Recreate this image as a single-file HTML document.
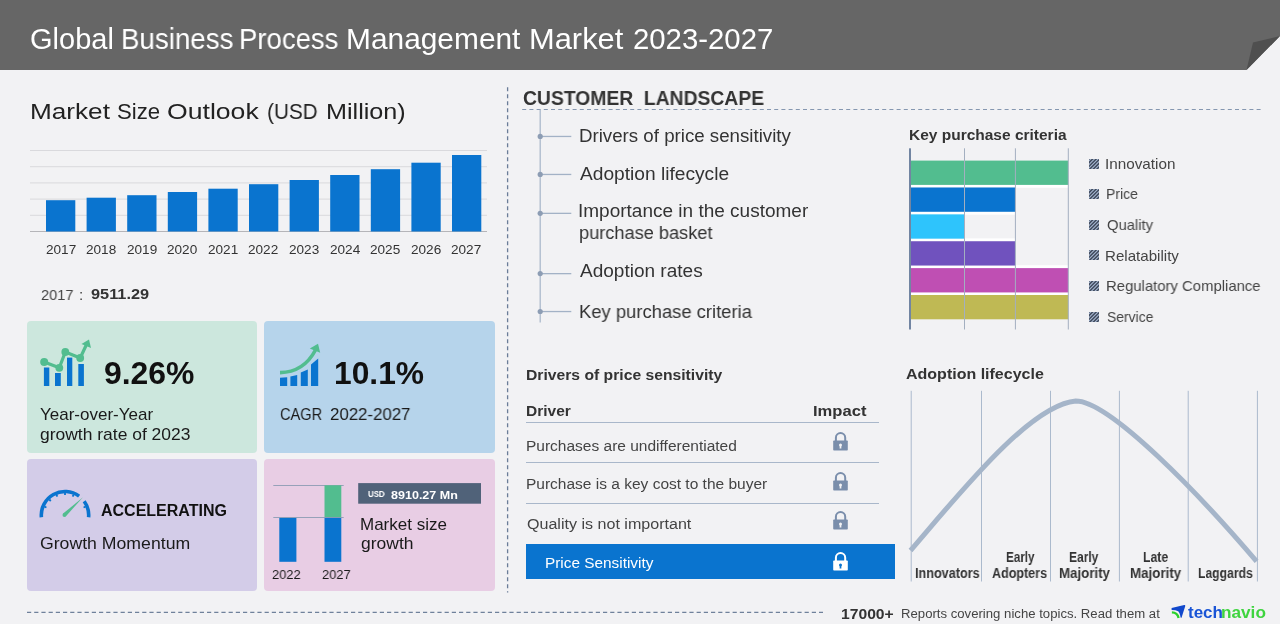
<!DOCTYPE html>
<html><head><meta charset="utf-8">
<style>
*{margin:0;padding:0;box-sizing:border-box}
html,body{width:1280px;height:624px;overflow:hidden;background:#f2f2f4;font-family:"Liberation Sans",sans-serif;color:#333;position:relative}
.a{position:absolute;white-space:nowrap;will-change:transform}
.r{position:absolute}
</style></head><body>
<svg class="r" style="left:0;top:0" width="1280" height="72"><polygon points="0,0 1280,0 1280,36 1246.5,70 0,70" fill="#666"/><polygon points="1246.5,70 1253,42.5 1280,36" fill="#4f4f4f"/></svg>
<svg class="r" style="left:0;top:140px" width="500" height="100"><rect x="30" y="10.00" width="457" height="1" fill="#d9d9dd"/><rect x="30" y="26.20" width="457" height="1" fill="#d9d9dd"/><rect x="30" y="42.40" width="457" height="1" fill="#d9d9dd"/><rect x="30" y="58.60" width="457" height="1" fill="#d9d9dd"/><rect x="30" y="74.80" width="457" height="1" fill="#d9d9dd"/><rect x="30" y="91.00" width="457" height="1" fill="#b5b5b9"/><rect x="46" y="60.20" width="29.3" height="31.30" fill="#0a74cf"/><rect x="86.6" y="57.70" width="29.3" height="33.80" fill="#0a74cf"/><rect x="127.2" y="55.20" width="29.3" height="36.30" fill="#0a74cf"/><rect x="167.8" y="52.00" width="29.3" height="39.50" fill="#0a74cf"/><rect x="208.4" y="48.70" width="29.3" height="42.80" fill="#0a74cf"/><rect x="249" y="44.20" width="29.3" height="47.30" fill="#0a74cf"/><rect x="289.6" y="40.00" width="29.3" height="51.50" fill="#0a74cf"/><rect x="330.2" y="35.00" width="29.3" height="56.50" fill="#0a74cf"/><rect x="370.8" y="29.20" width="29.3" height="62.30" fill="#0a74cf"/><rect x="411.4" y="22.70" width="29.3" height="68.80" fill="#0a74cf"/><rect x="452" y="15.00" width="29.3" height="76.50" fill="#0a74cf"/></svg>
<div class="r" style="left:27px;top:320.8px;width:230px;height:132px;background:#cce7dd;border-radius:4px"></div>
<div class="r" style="left:264.4px;top:320.8px;width:230.3px;height:132px;background:#b6d4eb;border-radius:4px"></div>
<div class="r" style="left:27px;top:459px;width:230px;height:131.6px;background:#d3cce8;border-radius:4px"></div>
<div class="r" style="left:264.4px;top:459px;width:230.3px;height:131.6px;background:#e8cde4;border-radius:4px"></div>
<svg class="r" style="left:36px;top:334px" width="60" height="60">
<g fill="#0a74cf"><rect x="7.9" y="33.5" width="5.4" height="18.5"/><rect x="19" y="39" width="5.8" height="13"/><rect x="31" y="23.6" width="5.3" height="28.4"/><rect x="42.3" y="30" width="5.6" height="22"/></g>
<polyline points="8.2,28 23.3,33.8 29.3,18 44.2,24 50.5,10.5" stroke="#52bd8f" stroke-width="3.2" fill="none" stroke-linejoin="round"/>
<g fill="#52bd8f"><circle cx="8.2" cy="28" r="4"/><circle cx="23.3" cy="33.8" r="3.9"/><circle cx="29.3" cy="18" r="3.9"/><circle cx="44.2" cy="24" r="3.9"/></g>
<polygon points="53,5.5 45.5,10 55,14" fill="#52bd8f"/>
</svg>
<svg class="r" style="left:274px;top:340px" width="50" height="50">
<g fill="#0a74cf"><polygon points="6,37.8 13.2,37.2 13.2,46 6,46"/><polygon points="16.4,36.5 23.2,34.9 23.2,46 16.4,46"/><polygon points="26.8,32.5 33.8,29.6 33.8,46 26.8,46"/><polygon points="37,24.4 44.2,18.4 44.2,46 37,46"/></g>
<path d="M6,32.6 C20,32.4 33,26 41.5,10" stroke="#52bd8f" stroke-width="3.6" fill="none"/>
<polygon points="44,3.8 35.8,8.6 46.2,12.8" fill="#52bd8f"/>
</svg>
<svg class="r" style="left:36px;top:484px" width="60" height="40"><path d="M5.39,33.27 A23.7,23.7 0 0 1 43.10,12.15 M48.17,17.27 A23.7,23.7 0 0 1 52.61,33.27" stroke="#0a74cf" stroke-width="3.6" fill="none"/><line x1="8.49" y1="22.70" x2="10.43" y2="23.51" stroke="#0a74cf" stroke-width="1.8"/><line x1="13.30" y1="15.50" x2="14.79" y2="16.99" stroke="#0a74cf" stroke-width="1.8"/><line x1="20.50" y1="10.69" x2="21.31" y2="12.63" stroke="#0a74cf" stroke-width="1.8"/><line x1="29.00" y1="9.00" x2="29.00" y2="11.10" stroke="#0a74cf" stroke-width="1.8"/><line x1="37.50" y1="10.69" x2="36.69" y2="12.63" stroke="#0a74cf" stroke-width="1.8"/><line x1="49.51" y1="22.70" x2="47.57" y2="23.51" stroke="#0a74cf" stroke-width="1.8"/><polygon points="29.71,32.38 47.00,13.30 27.09,29.62" fill="#52bd8f"/><circle cx="28.4" cy="31.0" r="1.9" fill="#52bd8f"/></svg>
<svg class="r" style="left:264px;top:470px" width="230" height="100">
<rect x="9.3" y="15" width="70.4" height="0.9" fill="#8d9cb4"/>
<rect x="15.3" y="47.8" width="17.1" height="44" fill="#0a74cf"/>
<rect x="60.5" y="15.3" width="16.8" height="32" fill="#52bd8f"/>
<rect x="60.5" y="47.3" width="16.8" height="44.5" fill="#0a74cf"/>
<rect x="9.3" y="47" width="70.4" height="0.9" fill="#8d9cb4"/>
<rect x="94.2" y="13.1" width="122.8" height="20.6" fill="#506279"/>
</svg>
<svg class="r" style="left:500px;top:80px" width="20" height="520"><line x1="7.6" y1="7.3" x2="7.6" y2="512.4" stroke="#6b7d98" stroke-width="1.3" stroke-dasharray="4 3"/></svg>
<svg class="r" style="left:520px;top:100px" width="750" height="20"><line x1="2.2" y1="9.5" x2="742.5" y2="9.5" stroke="#8597b0" stroke-width="1.2" stroke-dasharray="4 3.2"/></svg>
<svg class="r" style="left:520px;top:100px" width="80" height="230"><rect x="19.6" y="9.5" width="1.15" height="213" fill="#a3b2c6"/><rect x="20" y="35.80" width="31.3" height="1.3" fill="#a3b2c6"/><circle cx="20.2" cy="36.40" r="2.6" fill="#8d9db4"/><rect x="20" y="73.80" width="31.3" height="1.3" fill="#a3b2c6"/><circle cx="20.2" cy="74.40" r="2.6" fill="#8d9db4"/><rect x="20" y="112.70" width="31.3" height="1.3" fill="#a3b2c6"/><circle cx="20.2" cy="113.30" r="2.6" fill="#8d9db4"/><rect x="20" y="173.00" width="31.3" height="1.3" fill="#a3b2c6"/><circle cx="20.2" cy="173.60" r="2.6" fill="#8d9db4"/><rect x="20" y="210.90" width="31.3" height="1.3" fill="#a3b2c6"/><circle cx="20.2" cy="211.50" r="2.6" fill="#8d9db4"/></svg>
<svg class="r" style="left:900px;top:140px" width="180" height="200"><rect x="11" y="44.60" width="157.30" height="3.18" fill="#fff"/><rect x="11" y="71.48" width="104.30" height="3.18" fill="#fff"/><rect x="11" y="98.36" width="104.30" height="3.18" fill="#fff"/><rect x="11" y="125.24" width="157.30" height="3.18" fill="#fff"/><rect x="11" y="152.12" width="157.30" height="3.18" fill="#fff"/><rect x="11" y="20.60" width="157.30" height="24.3" fill="#52bd8f"/><rect x="11" y="47.48" width="104.30" height="24.3" fill="#0a74cf"/><rect x="11" y="74.36" width="53.30" height="24.3" fill="#2ec4fc"/><rect x="11" y="101.24" width="104.30" height="24.3" fill="#7052be"/><rect x="11" y="128.12" width="157.30" height="24.3" fill="#bf4fb3"/><rect x="11" y="155.00" width="157.30" height="24.3" fill="#bfb954"/><rect x="64.00" y="8.3" width="1" height="181.2" fill="#a3afc0"/><rect x="114.90" y="8.3" width="1" height="181.2" fill="#a3afc0"/><rect x="167.80" y="8.3" width="1" height="181.2" fill="#a3afc0"/><rect x="9.1" y="8.3" width="1.8" height="181.2" fill="#64799a"/></svg>
<svg class="r" style="left:1089px;top:158.80px" width="10" height="10"><rect width="10" height="10" fill="#aabbd6"/><g stroke="#3f495b" stroke-width="1.5"><line x1="-15.6" y1="12" x2="8.4" y2="-12"/><line x1="-12.0" y1="12" x2="12.0" y2="-12"/><line x1="-8.4" y1="12" x2="15.6" y2="-12"/><line x1="-4.8" y1="12" x2="19.2" y2="-12"/><line x1="-1.1999999999999993" y1="12" x2="22.8" y2="-12"/><line x1="2.4000000000000004" y1="12" x2="26.4" y2="-12"/><line x1="6.0" y1="12" x2="30.0" y2="-12"/><line x1="9.600000000000001" y1="12" x2="33.6" y2="-12"/></g></svg>
<svg class="r" style="left:1089px;top:189.36px" width="10" height="10"><rect width="10" height="10" fill="#aabbd6"/><g stroke="#3f495b" stroke-width="1.5"><line x1="-15.6" y1="12" x2="8.4" y2="-12"/><line x1="-12.0" y1="12" x2="12.0" y2="-12"/><line x1="-8.4" y1="12" x2="15.6" y2="-12"/><line x1="-4.8" y1="12" x2="19.2" y2="-12"/><line x1="-1.1999999999999993" y1="12" x2="22.8" y2="-12"/><line x1="2.4000000000000004" y1="12" x2="26.4" y2="-12"/><line x1="6.0" y1="12" x2="30.0" y2="-12"/><line x1="9.600000000000001" y1="12" x2="33.6" y2="-12"/></g></svg>
<svg class="r" style="left:1089px;top:219.92px" width="10" height="10"><rect width="10" height="10" fill="#aabbd6"/><g stroke="#3f495b" stroke-width="1.5"><line x1="-15.6" y1="12" x2="8.4" y2="-12"/><line x1="-12.0" y1="12" x2="12.0" y2="-12"/><line x1="-8.4" y1="12" x2="15.6" y2="-12"/><line x1="-4.8" y1="12" x2="19.2" y2="-12"/><line x1="-1.1999999999999993" y1="12" x2="22.8" y2="-12"/><line x1="2.4000000000000004" y1="12" x2="26.4" y2="-12"/><line x1="6.0" y1="12" x2="30.0" y2="-12"/><line x1="9.600000000000001" y1="12" x2="33.6" y2="-12"/></g></svg>
<svg class="r" style="left:1089px;top:250.48px" width="10" height="10"><rect width="10" height="10" fill="#aabbd6"/><g stroke="#3f495b" stroke-width="1.5"><line x1="-15.6" y1="12" x2="8.4" y2="-12"/><line x1="-12.0" y1="12" x2="12.0" y2="-12"/><line x1="-8.4" y1="12" x2="15.6" y2="-12"/><line x1="-4.8" y1="12" x2="19.2" y2="-12"/><line x1="-1.1999999999999993" y1="12" x2="22.8" y2="-12"/><line x1="2.4000000000000004" y1="12" x2="26.4" y2="-12"/><line x1="6.0" y1="12" x2="30.0" y2="-12"/><line x1="9.600000000000001" y1="12" x2="33.6" y2="-12"/></g></svg>
<svg class="r" style="left:1089px;top:281.04px" width="10" height="10"><rect width="10" height="10" fill="#aabbd6"/><g stroke="#3f495b" stroke-width="1.5"><line x1="-15.6" y1="12" x2="8.4" y2="-12"/><line x1="-12.0" y1="12" x2="12.0" y2="-12"/><line x1="-8.4" y1="12" x2="15.6" y2="-12"/><line x1="-4.8" y1="12" x2="19.2" y2="-12"/><line x1="-1.1999999999999993" y1="12" x2="22.8" y2="-12"/><line x1="2.4000000000000004" y1="12" x2="26.4" y2="-12"/><line x1="6.0" y1="12" x2="30.0" y2="-12"/><line x1="9.600000000000001" y1="12" x2="33.6" y2="-12"/></g></svg>
<svg class="r" style="left:1089px;top:311.60px" width="10" height="10"><rect width="10" height="10" fill="#aabbd6"/><g stroke="#3f495b" stroke-width="1.5"><line x1="-15.6" y1="12" x2="8.4" y2="-12"/><line x1="-12.0" y1="12" x2="12.0" y2="-12"/><line x1="-8.4" y1="12" x2="15.6" y2="-12"/><line x1="-4.8" y1="12" x2="19.2" y2="-12"/><line x1="-1.1999999999999993" y1="12" x2="22.8" y2="-12"/><line x1="2.4000000000000004" y1="12" x2="26.4" y2="-12"/><line x1="6.0" y1="12" x2="30.0" y2="-12"/><line x1="9.600000000000001" y1="12" x2="33.6" y2="-12"/></g></svg>
<div class="r" style="left:526px;top:421.70px;width:352.5px;height:1.2px;background:#a9b7ca"></div>
<div class="r" style="left:526px;top:461.90px;width:352.5px;height:1.2px;background:#a9b7ca"></div>
<div class="r" style="left:526px;top:502.70px;width:352.5px;height:1.2px;background:#a9b7ca"></div>
<div class="r" style="left:526px;top:544.2px;width:368.6px;height:34.7px;background:#0a74cf"></div>
<svg class="r" style="left:825px;top:425px" width="30" height="30"><path d="M10.9,16 V12.7 A4.65,4.65 0 0 1 20.2,12.7 V16" stroke="#7a8eab" stroke-width="2" fill="none"/><rect x="8.2" y="15.4" width="14.6" height="10.1" rx="0.8" fill="#7a8eab"/><circle cx="15.5" cy="20" r="1.5" fill="#f2f2f4"/><polygon points="14.8,20.5 16.2,20.5 16.4,23.4 14.6,23.4" fill="#f2f2f4"/></svg>
<svg class="r" style="left:825px;top:465px" width="30" height="30"><path d="M10.9,16 V12.7 A4.65,4.65 0 0 1 20.2,12.7 V16" stroke="#7a8eab" stroke-width="2" fill="none"/><rect x="8.2" y="15.4" width="14.6" height="10.1" rx="0.8" fill="#7a8eab"/><circle cx="15.5" cy="20" r="1.5" fill="#f2f2f4"/><polygon points="14.8,20.5 16.2,20.5 16.4,23.4 14.6,23.4" fill="#f2f2f4"/></svg>
<svg class="r" style="left:825px;top:503.5px" width="30" height="30"><path d="M10.9,16 V12.7 A4.65,4.65 0 0 1 20.2,12.7 V16" stroke="#7a8eab" stroke-width="2" fill="none"/><rect x="8.2" y="15.4" width="14.6" height="10.1" rx="0.8" fill="#7a8eab"/><circle cx="15.5" cy="20" r="1.5" fill="#f2f2f4"/><polygon points="14.8,20.5 16.2,20.5 16.4,23.4 14.6,23.4" fill="#f2f2f4"/></svg>
<svg class="r" style="left:825px;top:544.5px" width="30" height="30"><path d="M10.9,16 V12.7 A4.65,4.65 0 0 1 20.2,12.7 V16" stroke="#ffffff" stroke-width="2" fill="none"/><rect x="8.2" y="15.4" width="14.6" height="10.1" rx="0.8" fill="#ffffff"/><circle cx="15.5" cy="20" r="1.5" fill="#0a74cf"/><polygon points="14.8,20.5 16.2,20.5 16.4,23.4 14.6,23.4" fill="#0a74cf"/></svg>
<svg class="r" style="left:900px;top:380px" width="380" height="210"><rect x="10.70" y="10.8" width="1" height="190.7" fill="#abbacd"/><rect x="81.00" y="10.8" width="1" height="190.7" fill="#abbacd"/><rect x="150.00" y="10.8" width="1" height="190.7" fill="#abbacd"/><rect x="218.90" y="10.8" width="1" height="190.7" fill="#abbacd"/><rect x="287.70" y="10.8" width="1" height="190.7" fill="#abbacd"/><rect x="356.90" y="10.8" width="1" height="190.7" fill="#abbacd"/><path d="M10.5,170.5 C60,113 130,25 175.8,21 C210,21 300,115 356.6,181.4" stroke="#a5b5c9" stroke-width="5" fill="none"/></svg>
<svg class="r" style="left:20px;top:605px" width="810" height="15"><line x1="7" y1="7.4" x2="803" y2="7.4" stroke="#6f819b" stroke-width="1.1" stroke-dasharray="4.2 3"/></svg>
<svg class="r" style="left:1168px;top:600px" width="22" height="22"><path d="M3.6,7.9 L16.2,4.9 Q17.6,4.7 17.2,6.2 L13.6,17.6 Q13.1,18.4 12.6,17.5 Q11.8,12.6 10.2,11.3 Q7.8,10 3.6,10 Z" fill="#1148cc"/><path d="M3.9,12.4 Q9.5,12.5 10.6,18" stroke="#2bd12b" stroke-width="2.3" fill="none"/></svg>
<div class="a" style="left:29.90px;top:25.45px;font-size:29px;line-height:29px;color:#fff;">Global</div>
<div class="a" style="left:120.59px;top:25.45px;font-size:29px;line-height:29px;color:#fff;transform:scaleX(0.9551);transform-origin:0 50%;">Business</div>
<div class="a" style="left:239.10px;top:25.45px;font-size:29px;line-height:29px;color:#fff;transform:scaleX(0.9486);transform-origin:0 50%;">Process</div>
<div class="a" style="left:345.94px;top:25.45px;font-size:29px;line-height:29px;color:#fff;transform:scaleX(1.0304);transform-origin:0 50%;">Management</div>
<div class="a" style="left:529.17px;top:25.45px;font-size:29px;line-height:29px;color:#fff;transform:scaleX(1.0639);transform-origin:0 50%;">Market</div>
<div class="a" style="left:632.79px;top:25.45px;font-size:29px;line-height:29px;color:#fff;transform:scaleX(1.0113);transform-origin:0 50%;">2023-2027</div>
<div class="a" style="left:30.03px;top:101.80px;font-size:21.5px;line-height:21.5px;color:#222;transform:scaleX(1.2165);transform-origin:0 50%;">Market</div>
<div class="a" style="left:117.20px;top:101.80px;font-size:21.5px;line-height:21.5px;color:#222;transform:scaleX(1.0326);transform-origin:0 50%;">Size</div>
<div class="a" style="left:166.76px;top:101.80px;font-size:21.5px;line-height:21.5px;color:#222;transform:scaleX(1.2373);transform-origin:0 50%;">Outlook</div>
<div class="a" style="left:267.04px;top:101.80px;font-size:21.5px;line-height:21.5px;color:#222;transform:scaleX(0.9642);transform-origin:0 50%;">(USD</div>
<div class="a" style="left:326.33px;top:101.80px;font-size:21.5px;line-height:21.5px;color:#222;transform:scaleX(1.1709);transform-origin:0 50%;">Million)</div>
<div class="a" style="left:45.50px;top:242.60px;font-size:13px;line-height:13px;color:#333;transform:scaleX(1.0457);transform-origin:0 50%;">2017</div>
<div class="a" style="left:85.90px;top:242.60px;font-size:13px;line-height:13px;color:#333;transform:scaleX(1.0457);transform-origin:0 50%;">2018</div>
<div class="a" style="left:126.50px;top:242.60px;font-size:13px;line-height:13px;color:#333;transform:scaleX(1.0457);transform-origin:0 50%;">2019</div>
<div class="a" style="left:167.10px;top:242.60px;font-size:13px;line-height:13px;color:#333;transform:scaleX(1.0457);transform-origin:0 50%;">2020</div>
<div class="a" style="left:207.70px;top:242.60px;font-size:13px;line-height:13px;color:#333;transform:scaleX(1.0457);transform-origin:0 50%;">2021</div>
<div class="a" style="left:248.30px;top:242.60px;font-size:13px;line-height:13px;color:#333;transform:scaleX(1.0457);transform-origin:0 50%;">2022</div>
<div class="a" style="left:288.90px;top:242.60px;font-size:13px;line-height:13px;color:#333;transform:scaleX(1.0457);transform-origin:0 50%;">2023</div>
<div class="a" style="left:329.50px;top:242.60px;font-size:13px;line-height:13px;color:#333;transform:scaleX(1.0457);transform-origin:0 50%;">2024</div>
<div class="a" style="left:370.10px;top:242.60px;font-size:13px;line-height:13px;color:#333;transform:scaleX(1.0457);transform-origin:0 50%;">2025</div>
<div class="a" style="left:410.70px;top:242.60px;font-size:13px;line-height:13px;color:#333;transform:scaleX(1.0457);transform-origin:0 50%;">2026</div>
<div class="a" style="left:451.30px;top:242.60px;font-size:13px;line-height:13px;color:#333;transform:scaleX(1.0457);transform-origin:0 50%;">2027</div>
<div class="a" style="left:40.70px;top:286.65px;font-size:15.3px;line-height:15.3px;color:#444;transform:scaleX(0.9546);transform-origin:0 50%;">2017</div>
<div class="a" style="left:78.60px;top:286.65px;font-size:15.3px;line-height:15.3px;color:#444;">:</div>
<div class="a" style="left:90.70px;top:286.33px;font-size:15.2px;line-height:15.2px;color:#333;font-weight:bold;transform:scaleX(1.0744);transform-origin:0 50%;">9511.29</div>
<div class="a" style="left:103.99px;top:358.34px;font-size:31.5px;line-height:31.5px;color:#111;font-weight:bold;transform:scaleX(1.0124);transform-origin:0 50%;">9.26%</div>
<div class="a" style="left:40.40px;top:406.21px;font-size:17px;line-height:17px;color:#1a1a1a;transform:scaleX(0.9962);transform-origin:0 50%;">Year-over-Year</div>
<div class="a" style="left:40.40px;top:425.51px;font-size:17px;line-height:17px;color:#1a1a1a;transform:scaleX(1.0272);transform-origin:0 50%;">growth rate of 2023</div>
<div class="a" style="left:334.29px;top:358.34px;font-size:31.5px;line-height:31.5px;color:#111;font-weight:bold;transform:scaleX(1.0078);transform-origin:0 50%;">10.1%</div>
<div class="a" style="left:280.00px;top:405.81px;font-size:17px;line-height:17px;color:#1a1a1a;transform:scaleX(0.8600);transform-origin:0 50%;">CAGR</div>
<div class="a" style="left:330.20px;top:405.81px;font-size:17px;line-height:17px;color:#1a1a1a;transform:scaleX(0.9896);transform-origin:0 50%;">2022-2027</div>
<div class="a" style="left:100.60px;top:503.36px;font-size:16px;line-height:16px;color:#111;font-weight:bold;transform:scaleX(0.9962);transform-origin:0 50%;">ACCELERATING</div>
<div class="a" style="left:40.40px;top:535.41px;font-size:17px;line-height:17px;color:#1a1a1a;transform:scaleX(1.0389);transform-origin:0 50%;">Growth Momentum</div>
<div class="a" style="left:272.30px;top:568.37px;font-size:13.5px;line-height:13.5px;color:#1a1a1a;transform:scaleX(0.9551);transform-origin:0 50%;">2022</div>
<div class="a" style="left:322.00px;top:568.37px;font-size:13.5px;line-height:13.5px;color:#1a1a1a;transform:scaleX(0.9551);transform-origin:0 50%;">2027</div>
<div class="a" style="left:367.50px;top:489.60px;font-size:8.5px;line-height:8.5px;color:#fff;font-weight:bold;transform:scaleX(0.9209);transform-origin:0 50%;">USD</div>
<div class="a" style="left:390.50px;top:489.86px;font-size:10.8px;line-height:10.8px;color:#fff;font-weight:bold;transform:scaleX(1.1610);transform-origin:0 50%;">8910.27 Mn</div>
<div class="a" style="left:359.61px;top:515.61px;font-size:17px;line-height:17px;color:#1a1a1a;transform:scaleX(0.9947);transform-origin:0 50%;">Market size</div>
<div class="a" style="left:360.60px;top:535.41px;font-size:17px;line-height:17px;color:#1a1a1a;transform:scaleX(1.0283);transform-origin:0 50%;">growth</div>
<div class="a" style="left:522.60px;top:89.09px;font-size:19.5px;line-height:19.5px;color:#333;font-weight:bold;transform:scaleX(0.9901);transform-origin:0 50%;">CUSTOMER&nbsp; LANDSCAPE</div>
<div class="a" style="left:578.50px;top:126.97px;font-size:18.7px;line-height:18.7px;color:#333;">Drivers of price sensitivity</div>
<div class="a" style="left:579.50px;top:164.67px;font-size:18.7px;line-height:18.7px;color:#333;transform:scaleX(1.0253);transform-origin:0 50%;">Adoption lifecycle</div>
<div class="a" style="left:578.48px;top:202.07px;font-size:18.7px;line-height:18.7px;color:#333;transform:scaleX(1.0168);transform-origin:0 50%;">Importance in the customer</div>
<div class="a" style="left:578.53px;top:224.37px;font-size:18.7px;line-height:18.7px;color:#333;transform:scaleX(0.9735);transform-origin:0 50%;">purchase basket</div>
<div class="a" style="left:579.50px;top:261.77px;font-size:18.7px;line-height:18.7px;color:#333;transform:scaleX(1.0178);transform-origin:0 50%;">Adoption rates</div>
<div class="a" style="left:578.52px;top:303.47px;font-size:18.7px;line-height:18.7px;color:#333;transform:scaleX(0.9849);transform-origin:0 50%;">Key purchase criteria</div>
<div class="a" style="left:908.69px;top:126.96px;font-size:15.4px;line-height:15.4px;color:#333;font-weight:bold;transform:scaleX(1.0065);transform-origin:0 50%;">Key purchase criteria</div>
<div class="a" style="left:1105.48px;top:155.90px;font-size:15px;line-height:15px;color:#444;transform:scaleX(1.0165);transform-origin:0 50%;">Innovation</div>
<div class="a" style="left:1105.56px;top:186.46px;font-size:15px;line-height:15px;color:#444;transform:scaleX(0.9350);transform-origin:0 50%;">Price</div>
<div class="a" style="left:1106.50px;top:217.02px;font-size:15px;line-height:15px;color:#444;transform:scaleX(0.9855);transform-origin:0 50%;">Quality</div>
<div class="a" style="left:1105.49px;top:247.58px;font-size:15px;line-height:15px;color:#444;transform:scaleX(1.0073);transform-origin:0 50%;">Relatability</div>
<div class="a" style="left:1105.51px;top:278.14px;font-size:15px;line-height:15px;color:#444;transform:scaleX(0.9911);transform-origin:0 50%;">Regulatory Compliance</div>
<div class="a" style="left:1106.50px;top:308.70px;font-size:15px;line-height:15px;color:#444;transform:scaleX(0.9260);transform-origin:0 50%;">Service</div>
<div class="a" style="left:525.89px;top:366.88px;font-size:15.5px;line-height:15.5px;color:#333;font-weight:bold;transform:scaleX(1.0124);transform-origin:0 50%;">Drivers of price sensitivity</div>
<div class="a" style="left:525.90px;top:403.08px;font-size:15.5px;line-height:15.5px;color:#333;font-weight:bold;">Driver</div>
<div class="a" style="left:812.73px;top:403.18px;font-size:15.5px;line-height:15.5px;color:#333;font-weight:bold;transform:scaleX(1.0697);transform-origin:0 50%;">Impact</div>
<div class="a" style="left:525.90px;top:437.68px;font-size:15.5px;line-height:15.5px;color:#444;">Purchases are undifferentiated</div>
<div class="a" style="left:525.90px;top:475.63px;font-size:15.5px;line-height:15.5px;color:#444;">Purchase is a key cost to the buyer</div>
<div class="a" style="left:526.90px;top:515.63px;font-size:15.5px;line-height:15.5px;color:#444;transform:scaleX(1.0364);transform-origin:0 50%;">Quality is not important</div>
<div class="a" style="left:544.58px;top:555.00px;font-size:15px;line-height:15px;color:#fff;transform:scaleX(1.0241);transform-origin:0 50%;">Price Sensitivity</div>
<div class="a" style="left:906.30px;top:366.38px;font-size:15.5px;line-height:15.5px;color:#333;font-weight:bold;transform:scaleX(1.0323);transform-origin:0 50%;">Adoption lifecycle</div>
<div class="a" style="left:914.50px;top:567.12px;font-size:13.8px;line-height:13.8px;color:#333;font-weight:bold;transform:scaleX(0.9174);transform-origin:0 50%;">Innovators</div>
<div class="a" style="left:1005.60px;top:551.12px;font-size:13.8px;line-height:13.8px;color:#333;font-weight:bold;transform:scaleX(0.8451);transform-origin:0 50%;">Early</div>
<div class="a" style="left:992.35px;top:567.12px;font-size:13.8px;line-height:13.8px;color:#333;font-weight:bold;transform:scaleX(0.9083);transform-origin:0 50%;">Adopters</div>
<div class="a" style="left:1069.40px;top:551.12px;font-size:13.8px;line-height:13.8px;color:#333;font-weight:bold;transform:scaleX(0.8686);transform-origin:0 50%;">Early</div>
<div class="a" style="left:1058.60px;top:567.12px;font-size:13.8px;line-height:13.8px;color:#333;font-weight:bold;transform:scaleX(0.9620);transform-origin:0 50%;">Majority</div>
<div class="a" style="left:1142.55px;top:551.12px;font-size:13.8px;line-height:13.8px;color:#333;font-weight:bold;transform:scaleX(0.8886);transform-origin:0 50%;">Late</div>
<div class="a" style="left:1129.60px;top:567.12px;font-size:13.8px;line-height:13.8px;color:#333;font-weight:bold;transform:scaleX(0.9657);transform-origin:0 50%;">Majority</div>
<div class="a" style="left:1197.80px;top:567.12px;font-size:13.8px;line-height:13.8px;color:#333;font-weight:bold;transform:scaleX(0.8810);transform-origin:0 50%;">Laggards</div>
<div class="a" style="left:841.30px;top:605.70px;font-size:15px;line-height:15px;color:#333;font-weight:bold;transform:scaleX(1.0451);transform-origin:0 50%;">17000+</div>
<div class="a" style="left:900.65px;top:607.82px;font-size:12.5px;line-height:12.5px;color:#444;transform:scaleX(1.0522);transform-origin:0 50%;">Reports covering niche topics. Read them at</div>
<div class="a" style="left:1187.60px;top:603.51px;font-size:17px;line-height:17px;color:#1a55d6;font-weight:bold;transform:scaleX(0.9922);transform-origin:0 50%;">tech</div>
<div class="a" style="left:1220.89px;top:603.51px;font-size:17px;line-height:17px;color:#3fd43f;font-weight:bold;transform:scaleX(1.0112);transform-origin:0 50%;">navio</div>
</body></html>
